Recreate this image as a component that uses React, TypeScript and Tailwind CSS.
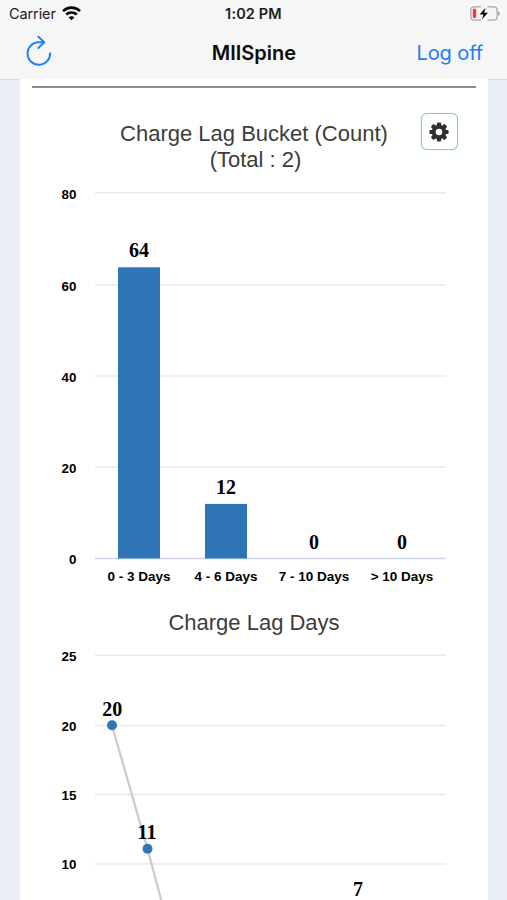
const ARIAL = "font-['Liberation_Sans',Arial,sans-serif]";
const TIMES = "font-['Liberation_Serif','Times_New_Roman',serif]";

const buckets = [
  { label: '0 - 3 Days', value: 64, x: 139 },
  { label: '4 - 6 Days', value: 12, x: 226 },
  { label: '7 - 10 Days', value: 0, x: 314 },
  { label: '> 10 Days', value: 0, x: 402 },
];

const bucketTicks = [
  { value: 80, y: 192.7 },
  { value: 60, y: 285 },
  { value: 40, y: 376 },
  { value: 20, y: 467 },
  { value: 0, y: 558.5 },
];

const dayTicks = [
  { value: 25, y: 655.2 },
  { value: 20, y: 725.5 },
  { value: 15, y: 794.5 },
  { value: 10, y: 864 },
];

function StatusBar() {
  return (
    <div className="flex h-[27px] items-center justify-between pl-[9px] pr-[7px] pt-px text-[14.5px] leading-none text-[#202020]">
      <div className="flex w-[150px] items-center gap-[6px]">
        <span className="w-[47px] whitespace-nowrap tracking-[-0.1px]">Carrier</span>
        <svg className="-mt-px" width="19" height="15" viewBox="0 0 19 15" fill="none" stroke="#080808" strokeWidth="2.7">
          <path d="M1 5.1C5.7.5 13.3.5 18 5.1" />
          <path d="M4.2 8.6c3-2.8 7.6-2.8 10.6 0" />
          <path d="M9.5 14.2 6.6 11.3c1.6-1.5 4.2-1.5 5.8 0Z" fill="#080808" stroke="none" />
        </svg>
      </div>
      <span className="-ml-[2px] font-semibold tracking-[0.15px]">1:02 PM</span>
      <div className="flex w-[150px] justify-end">
        <svg className="-mt-px" width="30" height="15" viewBox="0 0 30 15" fill="none">
          <path d="M11 .8H4.2A3.4 3.4 0 0 0 .8 4.2v6.6a3.4 3.4 0 0 0 3.4 3.4H11M17.5 .8h6.3a3.4 3.4 0 0 1 3.4 3.4v6.6a3.4 3.4 0 0 1-3.4 3.4h-6.3" stroke="#aaa6a6" strokeWidth="1.3" />
          <path d="M28.2 5v5c2.2-1 2.2-4 0-5Z" fill="#aaa6a6" />
          <rect x="2.8" y="2.8" width="3.4" height="9.2" rx="1" fill="#fb3b30" />
          <path d="m15.6 1.8-6 6.8h3.8L12 13.2l6-6.5h-3.8Z" fill="#080808" />
        </svg>
      </div>
    </div>
  );
}

function NavBar() {
  return (
    <div className="flex h-[52px] items-center justify-between pl-[26px] pr-[24px] text-[20px] leading-none">
      <div className="w-[90px]">
        <svg className="-mt-[5px]" width="26" height="32" viewBox="0 0 26 32" fill="none" stroke="#1a82f7" strokeWidth="2">
          <path d="M24.1 17.6A11.3 11.3 0 1 1 12.8 7.2H18.4" />
          <path d="m11.8 1.1 6.4 6.1-6.4 6.4" />
        </svg>
      </div>
      <h1 className="-ml-px font-semibold text-[#0c0c0c]">MIISpine</h1>
      <button className="w-[90px] whitespace-nowrap text-right tracking-[-0.1px] text-[#187ff5]">Log off</button>
    </div>
  );
}

function BucketChart() {
  return (
    <section className="relative h-[510px] pt-[33px]">
      <h2 className={`text-center text-[22px] leading-[26px] text-[#3c3c3c] ${ARIAL}`}>
        Charge Lag Bucket (Count)
        <span className="block pl-[3px]">(Total : 2)</span>
      </h2>
      <button aria-label="Chart settings" className="absolute left-[401px] top-[25px] flex h-[37px] w-[37px] items-center justify-center rounded-[6px] border border-[#7fc9e2] bg-white pr-px shadow-[0_0_1px_#8fd0e4]">
        <svg width="20" height="20" viewBox="-10 -10 20 20" fill="#2e2e2e">
          {[0, 45, 90, 135].map((angle) => (
            <rect key={angle} x="-2.1" y="-9.6" width="4.2" height="19.2" rx="1" transform={`rotate(${angle})`} />
          ))}
          <circle r="7.3" />
          <circle r="3.3" fill="white" />
        </svg>
      </button>
      <svg className="block" width="468" height="425" viewBox="20 173 468 425">
        {bucketTicks.map((t) => (
          <g key={t.value}>
            <line x1="95" x2="446" y1={t.y} y2={t.y} stroke={t.value === 0 ? '#ccd6eb' : '#e8e8e8'} strokeWidth="1.4" />
            <text x="76.5" y={t.y + 5.9} textAnchor="end" className={`text-[13.4px] font-bold ${ARIAL}`}>{t.value}</text>
          </g>
        ))}
        {buckets.map((b) => {
          const height = b.value * 4.55;
          return (
            <g key={b.label}>
              {b.value > 0 && <rect x={b.x - 21} y={558.5 - height} width="42" height={height} fill="#2e75b6" />}
              <text x={b.x} y={548.6 - height} textAnchor="middle" className={`text-[20px] font-bold ${TIMES}`}>{b.value}</text>
              <text x={b.x} y="581" textAnchor="middle" className={`text-[13.5px] font-bold ${ARIAL}`}>{b.label}</text>
            </g>
          );
        })}
      </svg>
    </section>
  );
}

function DaysChart() {
  return (
    <section className="pt-[12px]">
      <h2 className={`text-center text-[22px] leading-[26px] text-[#3c3c3c] ${ARIAL}`}>Charge Lag Days</h2>
      <svg className="block" width="468" height="264" viewBox="20 636 468 264">
        {dayTicks.map((t) => (
          <g key={t.value}>
            <line x1="95" x2="446" y1={t.y} y2={t.y} stroke="#e8e8e8" strokeWidth="1.4" />
            <text x="76.5" y={t.y + 5.4} textAnchor="end" className={`text-[13.4px] font-bold ${ARIAL}`}>{t.value}</text>
          </g>
        ))}
        <path d="M112 725.5 147.5 849 165 914" fill="none" stroke="#cccccc" strokeWidth="2.3" />
        <circle cx="112" cy="725.3" r="5" fill="#2e75b6" />
        <circle cx="147.5" cy="848.7" r="5" fill="#2e75b6" />
        <g textAnchor="middle" className={`text-[20px] font-bold ${TIMES}`}>
          <text x="112.3" y="716">20</text>
          <text x="147" y="839.4">11</text>
          <text x="358" y="895.6">7</text>
        </g>
      </svg>
    </section>
  );
}

export default function App() {
  return (
    <div className="flex h-[900px] w-[507px] flex-col overflow-hidden bg-[#ebeff6] font-['Inter',sans-serif]">
      <header className="h-[79px] shrink-0 bg-[#f7f6f7] shadow-[0_1px_0_#dcdcdd]">
        <StatusBar />
        <NavBar />
      </header>
      <main className="ml-5 w-[468px] flex-1 bg-white pt-[7px]">
        <div className="mx-3 h-[2px] bg-[#8b8b8b]" />
        <BucketChart />
        <DaysChart />
      </main>
    </div>
  );
}
